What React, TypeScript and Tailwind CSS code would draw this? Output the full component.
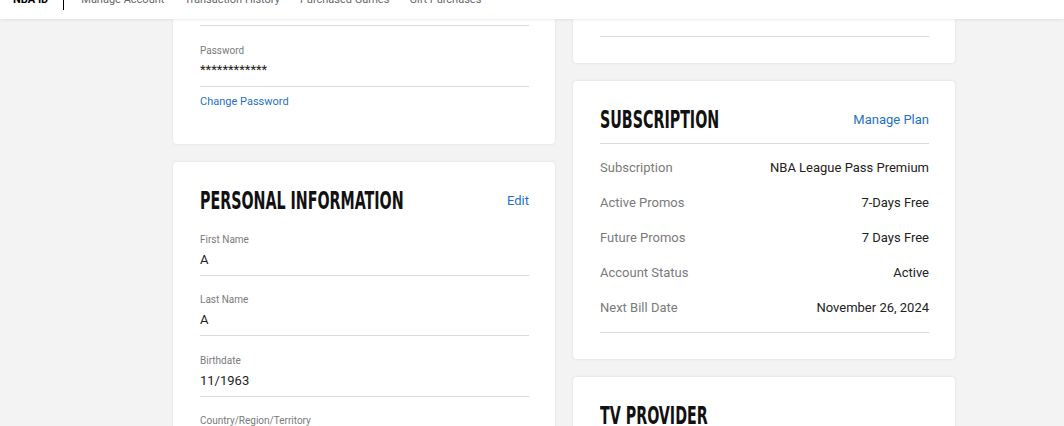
import React from 'react';

const body = { fontFamily: 'Roboto, "Liberation Sans", sans-serif' };

const Title = ({ children }: { children: React.ReactNode }) => (
    <h2 className="flex-1 min-w-0 whitespace-nowrap h-[28px] leading-[28px]">
        <span
            className="inline-block origin-left scale-x-[0.66] text-[24px] font-bold text-[#111]"
            style={{ fontFamily: '"DejaVu Sans Condensed", "DejaVu Sans", sans-serif', fontStretch: 'condensed' }}
        >
            {children}
        </span>
    </h2>
);

const Field = ({ label, value, className = '' }: { label: string; value: string; className?: string }) => (
    <div className={`border-b border-[#dadada] pb-[5px] ${className}`}>
        <div className="text-[10px] leading-[14px] text-[#7a7a7a]">{label}</div>
        <div className="mt-[3px] text-[13px] leading-[20px] text-[#222]">{value}</div>
    </div>
);

const Row = ({ label, value }: { label: string; value: string }) => (
    <div className="flex h-[35px] items-center justify-between text-[13px]">
        <span className="text-[#7a7a7a]">{label}</span>
        <span className="text-[#222]">{value}</span>
    </div>
);

const Card = ({ children }: { children: React.ReactNode }) => (
    <div className="bg-white rounded-[4px] shadow-[0_0_3px_rgba(0,0,0,0.09)] pl-[27px] pr-[26px]">{children}</div>
);

export default function App() {
    const nav = ['Manage Account', 'Transaction History', 'Purchased Games', 'Gift Purchases'];

    return (
        <div className="relative h-[426px] overflow-hidden bg-[#f3f3f3]" style={body}>
            {/* fixed header, page is scrolled so only its lower part shows */}
            <header className="absolute inset-x-0 top-0 z-10 h-[19px] overflow-hidden bg-white shadow-[0_1px_3px_rgba(0,0,0,0.08)]">
                <div className="-mt-[10px] flex h-[20px] items-center pl-[13px]">
                    <span className="text-[11px] font-bold text-black">NBA ID</span>
                    <span className="ml-[15px] mr-[17px] h-[20px] w-px bg-black" />
                    <nav className="flex gap-[20px] text-[11px] text-[#666]">
                        {nav.map((item) => (
                            <span key={item}>{item}</span>
                        ))}
                    </nav>
                </div>
            </header>

            <main className="flex gap-[18px] pl-[173px]">
                {/* left column */}
                <div className="flex w-[382px] flex-col gap-[18px]">
                    <Card>
                        <div className="h-[26px] border-b border-[#dadada]" />
                        <div className="border-b border-[#dadada] pt-[18px] pb-[6px]">
                            <div className="text-[10px] leading-[14px] text-[#7a7a7a]">Password</div>
                            <div className="mt-[2px] text-[13px] leading-[20px] text-[#222]">************</div>
                        </div>
                        <a className="mt-[7px] mb-[34px] block text-[11px] leading-[16px] text-[#1f72c4]">Change Password</a>
                    </Card>

                    <Card>
                        <div className="flex items-center pt-[25px]">
                            <Title>PERSONAL INFORMATION</Title>
                            <a className="text-[13px] text-[#1f72c4]">Edit</a>
                        </div>
                        <Field label="First Name" value="A" className="mt-[18px]" />
                        <Field label="Last Name" value="A" className="mt-[17px]" />
                        <Field label="Birthdate" value="11/1963" className="mt-[18px]" />
                        <Field label="Country/Region/Territory" value="United States" className="mt-[17px]" />
                        <div className="h-[40px]" />
                    </Card>
                </div>

                {/* right column */}
                <div className="flex w-[382px] flex-col gap-[18px]">
                    <Card>
                        <div className="h-[37px] border-b border-[#dadada]" />
                        <div className="h-[26px]" />
                    </Card>

                    <Card>
                        <div className="flex items-center border-b border-[#dadada] pt-[25px] pb-[9px]">
                            <Title>SUBSCRIPTION</Title>
                            <a className="text-[13px] text-[#1f72c4]">Manage Plan</a>
                        </div>
                        <div className="mt-[6px]">
                            <Row label="Subscription" value="NBA League Pass Premium" />
                            <Row label="Active Promos" value="7-Days Free" />
                            <Row label="Future Promos" value="7 Days Free" />
                            <Row label="Account Status" value="Active" />
                            <Row label="Next Bill Date" value="November 26, 2024" />
                        </div>
                        <div className="mt-[7px] border-b border-[#dadada]" />
                        <div className="h-[26px]" />
                    </Card>

                    <Card>
                        <div className="flex items-center pt-[25px]">
                            <Title>TV PROVIDER</Title>
                        </div>
                        <div className="h-[60px]" />
                    </Card>
                </div>
            </main>
        </div>
    );
}
